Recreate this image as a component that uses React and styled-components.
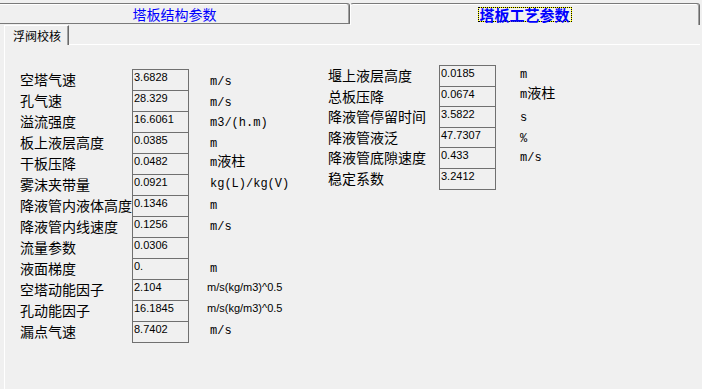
import React from 'react';
import styled, { createGlobalStyle } from 'styled-components';

const GlobalStyle = createGlobalStyle`
  html, body {
    margin: 0;
    padding: 0;
    background: #f0f0f0;
    width: 702px;
    height: 389px;
    overflow: hidden;
  }
  body {
    font-family: "Noto Sans CJK SC", "Noto Sans", sans-serif;
    color: #000;
  }
`;

// 左列参数
const leftRows = [
  { label: '空塔气速', value: '3.6828', unit: 'm/s', pad: 6 },
  { label: '孔气速', value: '28.329', unit: 'm/s', pad: 6 },
  { label: '溢流强度', value: '16.6061', unit: 'm3/(h.m)', pad: 5 },
  { label: '板上液层高度', value: '0.0385', unit: 'm', pad: 5 },
  { label: '干板压降', value: '0.0482', unit: 'm', cjk: '液柱', pad: 3 },
  { label: '雾沫夹带量', value: '0.0921', unit: 'kg(L)/kg(V)', pad: 3 },
  { label: '降液管内液体高度', value: '0.1346', unit: 'm', pad: 4 },
  { label: '降液管内线速度', value: '0.1256', unit: 'm/s', pad: 4 },
  { label: '流量参数', value: '0.0306' },
  { label: '液面梯度', value: '0.', unit: 'm', pad: 4 },
  { label: '空塔动能因子', value: '2.104', unit: 'm/s(kg/m3)^0.5', sans: true, pad: 2 },
  { label: '孔动能因子', value: '16.1845', unit: 'm/s(kg/m3)^0.5', sans: true, pad: 2 },
  { label: '漏点气速', value: '8.7402', unit: 'm/s', pad: 3 },
];

// 右列参数
const rightRows = [
  { label: '堰上液层高度', value: '0.0185', unit: 'm', pad: 3 },
  { label: '总板压降', value: '0.0674', unit: 'm', cjk: '液柱', pad: 2 },
  { label: '降液管停留时间', value: '3.5822', unit: 's', pad: 5 },
  { label: '降液管液泛', value: '47.7307', unit: '%', pad: 5 },
  { label: '降液管底隙速度', value: '0.433', unit: 'm/s', pad: 4 },
  { label: '稳定系数', value: '3.2412' },
];

function ParamColumn({ rows, top, labelWidth, gap, rowHeight, width }) {
  return (
    <Column $top={top} $width={width}>
      {rows.map((r) => (
        <Row key={r.label} $h={rowHeight}>
          <Label $w={labelWidth} $h={rowHeight}>{r.label}</Label>
          <Value $h={rowHeight}>{r.value}</Value>
          {r.unit && (
            <Unit $gap={gap} $pad={r.pad} $sans={r.sans}>
              {r.unit}
              {r.cjk && <UnitCjk>{r.cjk}</UnitCjk>}
            </Unit>
          )}
        </Row>
      ))}
    </Column>
  );
}

export default function App() {
  return (
    <Window>
      <GlobalStyle />
      <TabStrip>
        <OuterTab>塔板结构参数</OuterTab>
        <OuterTab $active>
          <Focus>塔板工艺参数</Focus>
        </OuterTab>
      </TabStrip>

      <InnerArea>
        <InnerTabStrip>
          <InnerTab>浮阀校核</InnerTab>
          <InnerTabRest />
        </InnerTabStrip>
        <Page>
          <ParamColumn rows={leftRows} top={24} labelWidth={112} gap={21} rowHeight={21} width={308} />
          <ParamColumn rows={rightRows} top={20} labelWidth={111} gap={24} rowHeight={20.6} />
        </Page>
      </InnerArea>
    </Window>
  );
}

// 样式定义
const Window = styled.div`
  width: 702px;
  height: 389px;
  display: flex;
  flex-direction: column;
  background: #f0f0f0;
`;

const TabStrip = styled.div`
  display: flex;
  align-items: flex-start;
  height: 25px;
  padding-top: 3px;
  box-sizing: border-box;
`;

const OuterTab = styled.div`
  box-sizing: border-box;
  display: flex;
  align-items: center;
  justify-content: center;
  font-size: ${(p) => (p.$active ? 15 : 14)}px;
  font-weight: ${(p) => (p.$active ? 700 : 400)};
  color: #0000ff;
  border-top: 1px solid #7a7a7a;
  ${(p) =>
    p.$active
      ? `
    width: 350px;
    height: 22px;
    padding-bottom: 1px;
    border-left: 1px solid #ffffff;
    border-right: 1px solid #696969;
    box-shadow: inset -1px 0 0 #a0a0a0, inset 0 1px 0 #ffffff;
    border-top-left-radius: 3px;
    border-top-right-radius: 3px;
  `
      : `
    width: 350px;
    height: 21px;
    border-bottom: 1px solid #7a7a7a;
    border-right: 1px solid #696969;
    box-shadow: inset -1px 0 0 #a0a0a0, inset 0 1px 0 #ffffff;
    border-top-right-radius: 3px;
  `}
`;

const Focus = styled.span`
  display: inline-block;
  line-height: 13px;
  padding-right: 1px;
  border: 1px dotted #000;
  background: linear-gradient(#f0f0f0, #f0f0f0) padding-box, #ffff00 border-box;
`;

const InnerArea = styled.div`
  flex: 1;
  display: flex;
  flex-direction: column;
  margin-left: 4px;
`;

const InnerTabStrip = styled.div`
  display: flex;
  height: 20px;
`;

const InnerTab = styled.div`
  box-sizing: border-box;
  width: 65px;
  height: 20px;
  padding-left: 8px;
  border-top: 1px solid #ffffff;
  border-left: 1px solid #ffffff;
  border-right: 1px solid #696969;
  box-shadow: inset -1px 0 0 #a0a0a0;
  font-size: 12px;
  line-height: 20px;
  white-space: nowrap;
`;

const InnerTabRest = styled.div`
  flex: 1;
  margin-right: 2px;
  border-bottom: 1px solid #ffffff;
`;

const Page = styled.div`
  flex: 1;
  display: flex;
  align-items: flex-start;
  padding-left: 15px;
  border-left: 1px solid #ffffff;
`;

const Column = styled.div`
  display: flex;
  flex-direction: column;
  margin-top: ${(p) => p.$top}px;
  ${(p) => (p.$width ? `width: ${p.$width}px;` : '')}
`;

const Row = styled.div`
  display: flex;
  align-items: flex-start;
  height: ${(p) => p.$h}px;
`;

const Label = styled.div`
  width: ${(p) => p.$w}px;
  font-size: 14px;
  line-height: ${(p) => p.$h}px;
  white-space: nowrap;
`;

const Value = styled.div`
  box-sizing: border-box;
  width: 57px;
  height: ${(p) => p.$h}px;
  padding: 1px 0 0 1px;
  border: 1px solid #707070;
  border-bottom: none;
  font-family: "Liberation Sans", Arial, sans-serif;
  font-size: 11px;
  line-height: 12px;
  white-space: nowrap;

  ${Row}:last-child & {
    height: ${(p) => p.$h + 1}px;
    border-bottom: 1px solid #707070;
  }
`;

const Unit = styled.div`
  padding-left: ${(p) => (p.$sans ? p.$gap - 3 : p.$gap)}px;
  padding-top: ${(p) => p.$pad}px;
  font-family: ${(p) =>
    p.$sans ? '"Liberation Sans", Arial, sans-serif' : '"Liberation Mono", "Courier New", monospace'};
  font-size: ${(p) => (p.$sans ? 11 : 12)}px;
  line-height: ${(p) => (p.$sans ? 13 : 14)}px;
  white-space: nowrap;
`;

const UnitCjk = styled.span`
  font-family: "Noto Sans CJK SC", sans-serif;
  font-size: 14px;
  line-height: 0;
`;
